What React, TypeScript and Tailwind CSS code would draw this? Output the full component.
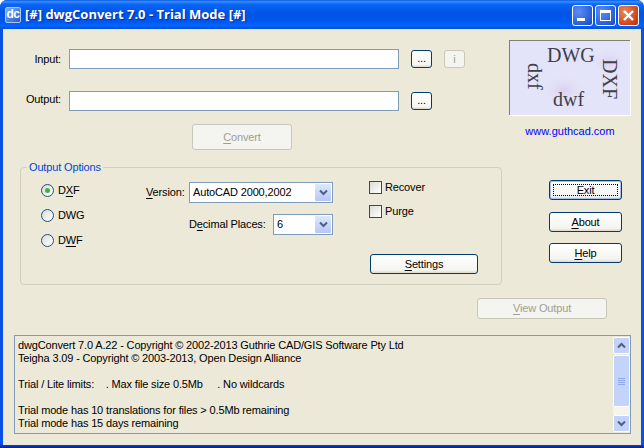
import React from "react";

const ctl = "font-['Liberation_Sans',sans-serif] text-[11px] tracking-[-0.15px] text-black";

function Btn({ w, h = "h-[20px]", focus, children }: { w: string; h?: string; focus?: boolean; children: React.ReactNode }) {
  return (
    <div className={`${w} ${h} shrink-0 rounded-[3px] border border-[#003c74] bg-[linear-gradient(180deg,#ffffff,#f4f4f0_85%,#dcd8cc)] flex items-center justify-center leading-none ${focus ? "shadow-[inset_0_0_0_1px_#a8c0ec]" : ""}`}>
      {focus ? (
        <div className="w-[calc(100%-6px)] h-[calc(100%-6px)] border border-dotted border-black flex items-center justify-center">{children}</div>
      ) : children}
    </div>
  );
}

function DisabledBtn({ w, h, children }: { w: string; h: string; children: React.ReactNode }) {
  return (
    <div className={`${w} ${h} shrink-0 rounded-[3px] border border-[#c9c7ba] bg-[#f4f4f0] text-[#a19f90] flex items-center justify-center leading-none`}>
      {children}
    </div>
  );
}

function U({ children }: { children: React.ReactNode }) {
  return <span className="underline underline-offset-2">{children}</span>;
}

function Radio({ checked, children }: { checked?: boolean; children: React.ReactNode }) {
  return (
    <div className="flex items-center gap-[4px] h-[14px]">
      <div className="w-[13px] h-[13px] rounded-full border border-[#1d5180] bg-[linear-gradient(135deg,#dcdcd4,#ffffff)] flex items-center justify-center">
        {checked && <div className="w-[5px] h-[5px] rounded-full bg-[#3fb33f]" />}
      </div>
      <span>{children}</span>
    </div>
  );
}

function Check({ children }: { children: React.ReactNode }) {
  return (
    <div className="flex items-center gap-[3px] h-[13px]">
      <div className="w-[13px] h-[13px] border border-[#1c5180] bg-[linear-gradient(135deg,#dcdcd4,#ffffff)]" />
      <span>{children}</span>
    </div>
  );
}

function Combo({ w, children }: { w: string; children: React.ReactNode }) {
  return (
    <div className={`${w} h-[21px] shrink-0 border border-[#7f9db9] bg-white flex items-center pl-[3px] pr-[1px]`}>
      <span className="flex-1 leading-none">{children}</span>
      <div className="w-[16px] h-[17px] rounded-[1px] bg-[linear-gradient(180deg,#dfe7fb,#b4c7f5)] flex items-center justify-center">
        <svg width="9" height="7" viewBox="0 0 9 7"><path d="M1 1.5l3.5 3.5L8 1.5" fill="none" stroke="#4d6185" strokeWidth="2" /></svg>
      </div>
    </div>
  );
}

function CapBtn({ children, cls }: { children: React.ReactNode; cls: string }) {
  return (
    <div className={`w-[21px] h-[21px] rounded-[3px] border border-white flex items-center justify-center ${cls}`}>{children}</div>
  );
}

const blueCap = "bg-[radial-gradient(circle_at_30%_30%,#5f8df2,#2a5ed8_70%,#1d46b8)]";

export default function App() {
  return (
    <div className="w-[644px] h-[448px] overflow-hidden flex flex-col bg-[linear-gradient(180deg,#0a52e6_0,#0a52e6_444px,#0a35b8_446px,#001ea0_448px)] rounded-t-[7px]">
      <div className="h-[29px] shrink-0 pl-[5px] pr-[5px] flex items-center bg-[linear-gradient(180deg,#0a5be0_0%,#3c8efc_6%,#0a66f5_14%,#0054e6_45%,#0058ee_75%,#0066ff_88%,#004fd8_100%)]">
        <div className="w-[16px] h-[16px] rounded-[2px] bg-[linear-gradient(135deg,#7fb0ff,#2458d0)] border border-[#a9c7f5] text-white font-['Liberation_Sans',sans-serif] font-bold text-[12px] leading-[13px] text-center tracking-[-0.5px] overflow-hidden">dc</div>
        <div className="ml-[4px] flex-1 text-white font-['Open_Sans',sans-serif] font-bold text-[13px] [text-shadow:1px_1px_1px_#0a2a90] whitespace-pre leading-none">[#] dwgConvert 7.0 - Trial Mode [#]</div>
        <div className="flex gap-[2px] mt-[1px]">
          <CapBtn cls={blueCap}><div className="w-[8px] h-[3px] bg-white mt-[8px] mr-[4px]" /></CapBtn>
          <CapBtn cls={blueCap}><div className="w-[11px] h-[11px] border border-white border-t-[3px]" /></CapBtn>
          <CapBtn cls="bg-[radial-gradient(circle_at_30%_30%,#e9895f,#d0431c_70%,#b5330f)]">
            <svg width="13" height="13" viewBox="0 0 13 13"><path d="M2 2l9 9M11 2l-9 9" stroke="#fff" strokeWidth="2.4" /></svg>
          </CapBtn>
        </div>
      </div>

      <div className="flex-1 mx-[3px] mb-[3px] bg-[#ece9d8] flex flex-col pl-[11px] pr-[10px] pt-[11px]">
        {/* Top area */}
        <div className="flex h-[122px] shrink-0">
          <div className="w-[495px] shrink-0 flex flex-col pt-[9px]">
            <div className={`${ctl} flex items-center h-[20px]`}>
              <span className="w-[47px] text-right">Input:</span>
              <div className="ml-[8px] w-[330px] h-[20px] border border-[#7f9db9] bg-white" />
              <div className="ml-[12px]"><Btn w="w-[21px]" h="h-[18px]"><span className="pb-[2px]">...</span></Btn></div>
              <div className="ml-[12px]"><DisabledBtn w="w-[21px]" h="h-[18px]">i</DisabledBtn></div>
            </div>
            <div className={`${ctl} flex items-center h-[20px] mt-[22px]`}>
              <span className="w-[47px] text-right pb-[3px]">Output:</span>
              <div className="ml-[8px] w-[330px] h-[20px] border border-[#7f9db9] bg-white" />
              <div className="ml-[12px]"><Btn w="w-[21px]" h="h-[18px]"><span className="pb-[2px]">...</span></Btn></div>
            </div>
            <div className={`${ctl} mt-[13px] ml-[178px]`}>
              <DisabledBtn w="w-[100px]" h="h-[26px]"><span><U>C</U>onvert</span></DisabledBtn>
            </div>
          </div>
          <div className="flex flex-col items-center w-[122px]">
            <svg width="122" height="76" viewBox="0 0 122 76" className="block shrink-0">
              <defs>
                <radialGradient id="blob" cx="50%" cy="50%" r="50%">
                  <stop offset="0%" stopColor="#dccfee" />
                  <stop offset="100%" stopColor="#e3e3f9" stopOpacity="0" />
                </radialGradient>
              </defs>
              <rect width="122" height="76" fill="#ffffff" />
              <path d="M0 0H121V1H1V75H0Z" fill="#808070" />
              <rect x="1" y="1" width="120" height="74" fill="#e3e3f9" />
              <ellipse cx="55" cy="50" rx="22" ry="16" fill="url(#blob)" />
              <ellipse cx="100" cy="22" rx="18" ry="14" fill="url(#blob)" />
              <g fill="#404048" fontFamily="'Liberation Serif',serif" fontSize="20">
                <text x="38" y="22">DWG</text>
                <text x="44" y="66">dwf</text>
                <text transform="translate(94,19) rotate(90)">DXF</text>
                <text transform="translate(19,23) rotate(90)">dxf</text>
              </g>
            </svg>
            <div className="mt-[8px] font-['Liberation_Sans',sans-serif] text-[11px] leading-[14px] text-[#0000ff] whitespace-nowrap">www.guthcad.com</div>
          </div>
        </div>

        {/* Middle area */}
        <div className={`${ctl} flex h-[136px] shrink-0`}>
          <div className="ml-[6px] mt-[5px] w-[482px] h-[118px] border border-[#d0d0bf] rounded-[4px] relative flex">
            <div className="absolute left-[6px] -top-[7px] px-[2px] bg-[#ece9d8] text-[#0046d5] leading-[13px]">Output Options</div>
            <div className="w-[100px] pl-[20px] pt-[15px] flex flex-col gap-[11px]">
              <Radio checked><>D<U>X</U>F</></Radio>
              <Radio>DWG</Radio>
              <Radio><>D<U>W</U>F</></Radio>
            </div>
            <div className="w-[223px] pl-[25px] pt-[14px] flex flex-col gap-[11px]">
              <div className="flex items-center gap-[5px]"><span className="w-[38px] whitespace-nowrap"><U>V</U>ersion:</span><Combo w="w-[144px]">AutoCAD 2000,2002</Combo></div>
              <div className="flex items-center pl-[43px] gap-[8px]"><span className="w-[76px] whitespace-nowrap">D<U>e</U>cimal Places:</span><Combo w="w-[60px]">6</Combo></div>
            </div>
            <div className="pl-[25px] pt-[13px] flex flex-col">
              <div className="flex flex-col gap-[11px]">
                <Check>Recover</Check>
                <Check>Purge</Check>
              </div>
              <div className="mt-[36px] ml-[1px]"><Btn w="w-[108px]"><span><U>S</U>ettings</span></Btn></div>
            </div>
          </div>
          <div className="ml-[47px] mt-[18px] flex flex-col gap-[12px]">
            <Btn w="w-[73px]" focus>Exit</Btn>
            <Btn w="w-[73px]"><span><U>A</U>bout</span></Btn>
            <div className="-mt-[1px]"><Btn w="w-[73px]"><span><U>H</U>elp</span></Btn></div>
          </div>
        </div>

        <div className={`${ctl} ml-[463px]`}>
          <DisabledBtn w="w-[130px]" h="h-[21px]"><span><U>V</U>iew Output</span></DisabledBtn>
        </div>

        {/* Log */}
        <div className="mt-[16px] w-[617px] h-[99px] border border-[#7f9db9] flex">
          <div className={`${ctl} flex-1 pl-[3px] pt-[3px] leading-[13px] whitespace-pre`}>
            <div>dwgConvert 7.0 A.22 - Copyright © 2002-2013 Guthrie CAD/GIS Software Pty Ltd</div>
            <div>Teigha 3.09 - Copyright © 2003-2013, Open Design Alliance</div>
            <div>&nbsp;</div>
            <div>Trial / Lite limits:    . Max file size 0.5Mb     . No wildcards</div>
            <div>&nbsp;</div>
            <div>Trial mode has 10 translations for files &gt; 0.5Mb remaining</div>
            <div>Trial mode has 15 days remaining</div>
          </div>
          <div className="w-[17px] shrink-0 flex flex-col py-[1px]">
            <div className="h-[17px] rounded-[2px] border border-white bg-[#c4d3f9] flex items-center justify-center">
              <svg width="9" height="7" viewBox="0 0 9 7"><path d="M1 5.5L4.5 2 8 5.5" fill="none" stroke="#4d6185" strokeWidth="2" /></svg>
            </div>
            <div className="mt-[1px] h-[52px] rounded-[2px] border border-white bg-[#c4d3f9] flex flex-col items-center justify-center gap-[1px]">
              <div className="w-[7px] h-[1px] bg-[#8fa9ef]" /><div className="w-[7px] h-[1px] bg-[#8fa9ef]" /><div className="w-[7px] h-[1px] bg-[#8fa9ef]" /><div className="w-[7px] h-[1px] bg-[#8fa9ef]" />
            </div>
            <div className="flex-1 bg-[#f5f4ef]" />
            <div className="h-[17px] rounded-[2px] border border-white bg-[#c4d3f9] flex items-center justify-center">
              <svg width="9" height="7" viewBox="0 0 9 7"><path d="M1 1.5l3.5 3.5L8 1.5" fill="none" stroke="#4d6185" strokeWidth="2" /></svg>
            </div>
          </div>
        </div>
      </div>
    </div>
  );
}
